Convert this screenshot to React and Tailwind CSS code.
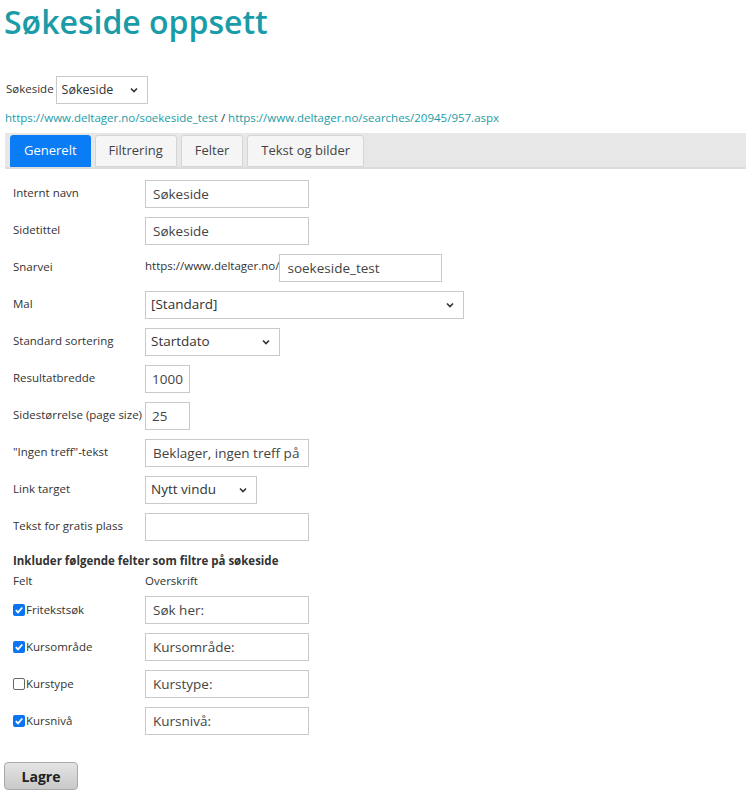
import { useState } from "react";

const Chevron = () => (
  <svg className="absolute right-2 top-1/2 -translate-y-1/2 pointer-events-none" width="10" height="10" viewBox="0 0 10 10">
    <path d="M2 3.5 L5 6.5 L8 3.5" fill="none" stroke="#333" strokeWidth="1.6" />
  </svg>
);

function Select({ value, w, text = "text-[13.5px]" }) {
  return (
    <div className={`relative ${w} h-[28px] border border-[#c9c9c9] bg-white flex items-center pl-[5px] ${text} text-[#333]`}>
      {value}
      <Chevron />
    </div>
  );
}

function Field({ value, w = "w-[164px]", pad = "px-[7px]" }) {
  return (
    <input
      readOnly
      value={value}
      className={`${w} h-[28px] border border-[#c9c9c9] ${pad} text-[13.5px] text-[#444] outline-none`}
    />
  );
}

function Row({ label, children }) {
  return (
    <div className="flex items-center h-[37px]">
      <div className="w-[132px] text-[11.5px] text-[#333] whitespace-nowrap -mt-[2px]">{label}</div>
      {children}
    </div>
  );
}

function Check({ checked }) {
  return checked ? (
    <span className="w-[12px] h-[12px] rounded-[2px] bg-[#0a75f2] inline-flex items-center justify-center">
      <svg width="10" height="10" viewBox="0 0 10 10">
        <path d="M1.8 5.2 L4 7.4 L8.3 2.5" fill="none" stroke="white" strokeWidth="1.8" />
      </svg>
    </span>
  ) : (
    <span className="w-[12px] h-[12px] rounded-[2px] border border-[#666] bg-white inline-block" />
  );
}

export default function App() {
  const [tab] = useState("Generelt");
  const tabs = ["Generelt", "Filtrering", "Felter", "Tekst og bilder"];
  const filters = [
    { name: "Fritekstsøk", head: "Søk her:", on: true },
    { name: "Kursområde", head: "Kursområde:", on: true },
    { name: "Kurstype", head: "Kurstype:", on: false },
    { name: "Kursnivå", head: "Kursnivå:", on: true },
  ];

  return (
    <div className="font-['Open_Sans',sans-serif] bg-white w-[750px] h-[791px] overflow-hidden text-[#333]">
      <h1 className="text-[32px] font-semibold text-[#1a9ca8] pl-[4px] leading-[44px]">Søkeside oppsett</h1>

      <div className="flex items-center mt-[32px] pl-[6px]">
        <span className="text-[11.5px] mr-[2px] -mt-[2px]">Søkeside</span>
        <Select value="Søkeside" w="w-[92px]" text="text-[12.5px]" />
      </div>

      <div className="pl-[5px] mt-[5px] text-[11.5px] text-[#1a9ca8] leading-[18px]">
        https://www.deltager.no/soekeside_test <span className="text-[#333]">/</span> https://www.deltager.no/searches/20945/957.aspx
      </div>

      <div className="ml-[5px] mr-[4px] mt-[6px] h-[36px] bg-[#e7e7e7] border-b-2 border-[#dcdcdc] flex items-end pl-[5px] gap-[4px]">
        {tabs.map((t) => (
          <div
            key={t}
            className={`h-[32px] px-[13px] flex items-center text-[13px] rounded-t-[3px] border ${
              t === tab ? "bg-[#0a7cf5] border-[#0a7cf5] text-white" : "bg-[#f5f5f5] border-[#d5d5d5] text-[#444]"
            }`}
          >
            {t}
          </div>
        ))}
      </div>

      <div className="pl-[13px] pt-[6px]">
        <Row label="Internt navn"><Field value="Søkeside" /></Row>
        <Row label="Sidetittel"><Field value="Søkeside" /></Row>
        <Row label="Snarvei">
          <span className="text-[11.5px] -mt-[4px]">https://www.deltager.no/</span>
          <Field value="soekeside_test" w="w-[163px]" />
        </Row>
        <Row label="Mal"><Select value="[Standard]" w="w-[319px]" /></Row>
        <Row label="Standard sortering"><Select value="Startdato" w="w-[135px]" /></Row>
        <Row label="Resultatbredde"><Field value="1000" w="w-[45px]" pad="pl-[6px] pr-0" /></Row>
        <Row label="Sidestørrelse (page size)"><Field value="25" w="w-[45px]" pad="pl-[6px] pr-0" /></Row>
        <Row label={'"Ingen treff"-tekst'}><Field value="Beklager, ingen treff på denne søkesiden" /></Row>
        <Row label="Link target"><Select value="Nytt vindu" w="w-[112px]" /></Row>
        <Row label="Tekst for gratis plass"><Field value="" /></Row>

        <div className="text-[11.5px] font-bold mt-[7px] leading-[18px]">Inkluder følgende felter som filtre på søkeside</div>
        <div className="flex text-[11.5px] mt-[3px] leading-[16px]">
          <span className="w-[132px]">Felt</span>
          <span>Overskrift</span>
        </div>
        <div className="mt-[2px]">
          {filters.map((f) => (
            <Row
              key={f.name}
              label={
                <span className="flex items-center mt-[2px]">
                  <Check checked={f.on} />
                  <span className="ml-[1px]">{f.name}</span>
                </span>
              }
            >
              <Field value={f.head} />
            </Row>
          ))}
        </div>
      </div>

      <button className="ml-[4px] mt-[23px] w-[74px] h-[28px] rounded-[4px] border border-[#a8a8a8] bg-gradient-to-b from-[#e4e4e4] to-[#c9c9c9] text-[14px] font-bold text-[#222]">
        Lagre
      </button>
    </div>
  );
}
